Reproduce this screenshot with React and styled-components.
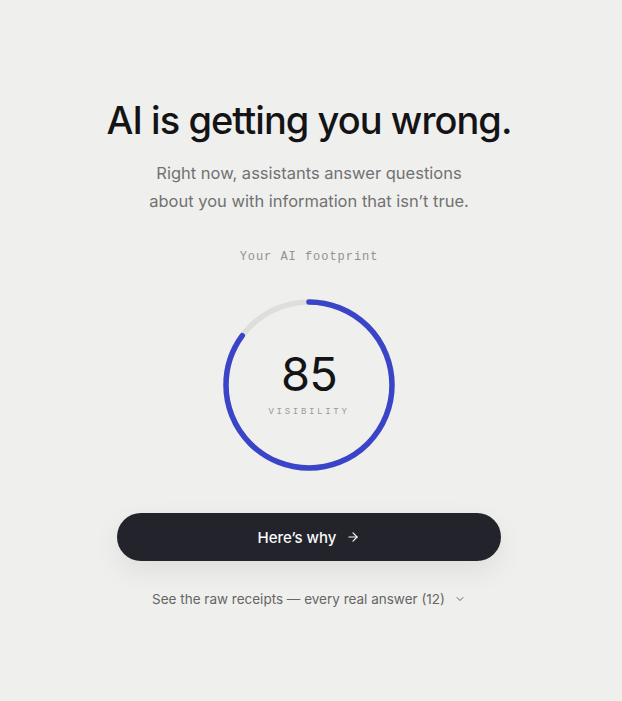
import React from 'react';
import styled, { createGlobalStyle } from 'styled-components';

const Global = createGlobalStyle`
  html, body {
    margin: 0;
    padding: 0;
    background: #efefed;
  }
  body {
    font-family: Inter, "Noto Sans", sans-serif;
    -webkit-font-smoothing: antialiased;
  }
`

const Page = styled.main`
  min-height: 701px;
  display: flex;
  flex-direction: column;
  align-items: center;
  padding: 95px 4px 0 0;
  box-sizing: border-box;
`

const Title = styled.h1`
  margin: 0;
  font-size: 38px;
  font-weight: 500;
  letter-spacing: -0.025em;
  color: #141416;
  line-height: 50px;
`

const Lead = styled.p`
  margin: 14px 0 0;
  font-size: 16.5px;
  line-height: 28px;
  color: #727272;
  text-align: center;
`

const Eyebrow = styled.div`
  margin-top: 35px;
  font-family: "Liberation Mono", "DejaVu Sans Mono", monospace;
  font-size: 12px;
  letter-spacing: 0.08em;
  color: #929292;
`

const Gauge = styled.div`
  position: relative;
  width: 176px;
  height: 176px;
  margin-top: 33px;
  display: flex;
  flex-direction: column;
  align-items: center;
  justify-content: center;
`

const Ring = styled.svg`
  position: absolute;
  inset: 0;
  transform: rotate(-90deg);
`

const Score = styled.div`
  font-size: 47px;
  font-weight: 400;
  line-height: 1;
  letter-spacing: -0.02em;
  color: #141416;
  margin-top: -4px;
`

const ScoreLabel = styled.div`
  margin-top: 10px;
  font-family: "Liberation Mono", "DejaVu Sans Mono", monospace;
  font-size: 9px;
  letter-spacing: 0.3em;
  color: #9a9a9a;
`

const Button = styled.button`
  margin-top: 40px;
  width: 384px;
  height: 48px;
  border: 0;
  border-radius: 24px;
  background: #23242b;
  color: #fafafa;
  font-family: inherit;
  font-size: 15px;
  font-weight: 500;
  display: flex;
  align-items: center;
  justify-content: center;
  gap: 10px;
  box-shadow: 0 10px 28px rgba(0, 0, 0, 0.07);
  cursor: pointer;
`

const More = styled.button`
  margin-top: 30px;
  border: 0;
  background: none;
  padding: 0;
  font-family: inherit;
  font-size: 13.5px;
  color: #666;
  display: flex;
  align-items: center;
  gap: 9px;
  cursor: pointer;
`

function ScoreRing({ value }) {
  const r = 83;
  const c = 2 * Math.PI * r;
  return (
    <Ring width="176" height="176" viewBox="0 0 176 176">
      <circle cx="88" cy="88" r={r} fill="none" stroke="#dededc" strokeWidth="5.5" />
      <circle
        cx="88"
        cy="88"
        r={r}
        fill="none"
        stroke="#3a44c8"
        strokeWidth="5.5"
        strokeLinecap="round"
        strokeDasharray={`${(c * value) / 100} ${c}`}
      />
    </Ring>
  );
}

export default function App() {
  return (
    <Page>
      <Global />
      <Title>AI is getting you wrong.</Title>
      <Lead>
        Right now, assistants answer questions
        <br />
        about you with information that isn’t true.
      </Lead>
      <Eyebrow>Your AI footprint</Eyebrow>
      <Gauge>
        <ScoreRing value={85} />
        <Score>85</Score>
        <ScoreLabel>VISIBILITY</ScoreLabel>
      </Gauge>
      <Button>
        Here’s why
        <svg width="14" height="14" viewBox="0 0 24 24" fill="none" stroke="currentColor" strokeWidth="2" strokeLinecap="round" strokeLinejoin="round">
          <path d="M5 12h14" />
          <path d="m12 5 7 7-7 7" />
        </svg>
      </Button>
      <More>
        See the raw receipts — every real answer (12)
        <svg width="12" height="12" viewBox="0 0 24 24" fill="none" stroke="currentColor" strokeWidth="2" strokeLinecap="round" strokeLinejoin="round">
          <path d="m6 9 6 6 6-6" />
        </svg>
      </More>
    </Page>
  );
}
